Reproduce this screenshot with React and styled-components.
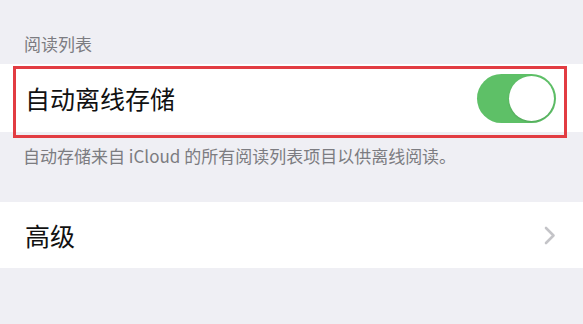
import React, { useState } from "react";
import styled, { createGlobalStyle } from "styled-components";

const GlobalStyle = createGlobalStyle`
  html, body {
    margin: 0;
    padding: 0;
    background: #efeff4;
  }
  body {
    font-family: "Noto Sans CJK SC", "Liberation Sans", sans-serif;
  }
`;

const Page = styled.div`
  width: 583px;
  height: 324px;
  background: #efeff4;
  overflow: hidden;
`;

const SectionHeader = styled.div`
  height: 64px;
  box-sizing: border-box;
  padding: 34px 24px 0;
  font-size: 17px;
  line-height: 20px;
  color: #7c7c81;
`;

const Row = styled.div`
  position: relative;
  height: ${(p) => p.height}px;
  background: #ffffff;
  display: flex;
  align-items: center;
  justify-content: space-between;
  padding: 0 ${(p) => p.padRight}px 0 25px;
  box-sizing: border-box;
`;

const RowLabel = styled.span`
  font-size: 25px;
  line-height: 30px;
  color: #111111;
`;

const Highlight = styled.div`
  position: absolute;
  top: 2px;
  left: 13px;
  right: 16px;
  bottom: -6px;
  border: 3px solid #e23c42;
  pointer-events: none;
`;

const Track = styled.button`
  width: 79px;
  height: 49px;
  border-radius: 25px;
  border: none;
  padding: 2px;
  box-sizing: border-box;
  background: ${(p) => (p.on ? "#5ec067" : "#e5e5ea")};
  display: flex;
  justify-content: ${(p) => (p.on ? "flex-end" : "flex-start")};
  cursor: pointer;
`;

const Thumb = styled.span`
  width: 45px;
  height: 45px;
  border-radius: 50%;
  background: #ffffff;
  box-shadow: 0 1px 2px rgba(0, 0, 0, 0.15);
`;

const Footer = styled.div`
  height: 70px;
  box-sizing: border-box;
  padding: 14px 23px 0;
  font-size: 17px;
  line-height: 20px;
  color: #7c7c81;
`;

const Chevron = () => (
  <svg width="12" height="19" viewBox="0 0 12 19">
    <polyline
      points="2,2 9.5,9.5 2,17"
      fill="none"
      stroke="#c4c4c8"
      strokeWidth="2.6"
      strokeLinecap="round"
      strokeLinejoin="round"
    />
  </svg>
);

export default function App() {
  const [offline, setOffline] = useState(true);

  return (
    <Page>
      <GlobalStyle />
      <SectionHeader>阅读列表</SectionHeader>
      <Row height={68} padRight={27}>
        <RowLabel>自动离线存储</RowLabel>
        <Track on={offline} onClick={() => setOffline(!offline)}>
          <Thumb />
        </Track>
        <Highlight />
      </Row>
      <Footer>自动存储来自 iCloud 的所有阅读列表项目以供离线阅读。</Footer>
      <Row height={66} padRight={27}>
        <RowLabel>高级</RowLabel>
        <Chevron />
      </Row>
    </Page>
  );
}
